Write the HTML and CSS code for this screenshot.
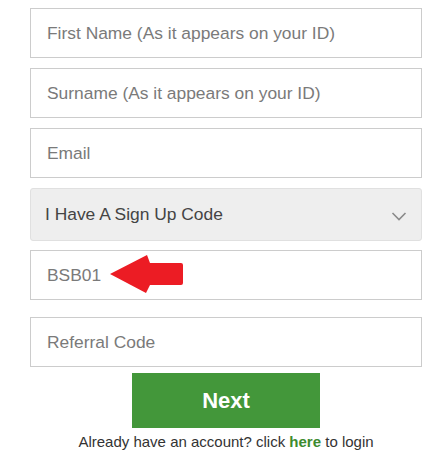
FILE: index.html
```html
<!DOCTYPE html>
<html>
<head>
<meta charset="utf-8">
<link rel="stylesheet" href="styles.css">
</head>
<body>
<form class="form">
  <input class="field" type="text" placeholder="First Name (As it appears on your ID)">
  <input class="field" type="text" placeholder="Surname (As it appears on your ID)">
  <input class="field" type="text" placeholder="Email">
  <div class="select">
    <span class="select-text">I Have A Sign Up Code</span>
    <svg class="chevron" width="16" height="10" viewBox="0 0 16 10"><path d="M1.5 2 L8 8.5 L14.5 2" fill="none" stroke="#8a8a8a" stroke-width="1.6"/></svg>
  </div>
  <div class="code-wrap">
    <input class="field code" type="text" placeholder="BSB01">
    <svg class="arrow" width="75" height="40" viewBox="0 0 75 40"><path d="M0 19 L37 0 L40 8 L71 8 Q73 8 73 10 L73 28 Q73 30 71 30 L40 30 L36 38 Z" fill="#ec1c24"/></svg>
  </div>
  <input class="field referral" type="text" placeholder="Referral Code">
  <button class="next" type="button">Next</button>
  <p class="login">Already have an account? click <a href="#">here</a> to login</p>
</form>
</body>
</html>
```
FILE: styles.css
```css
* { box-sizing: border-box; }
body {
  margin: 0;
  background: #fff;
  font-family: "Liberation Sans", Arial, sans-serif;
}
.form {
  width: 392px;
  margin: 0 0 0 30px;
  padding-top: 8px;
  display: flex;
  flex-direction: column;
  align-items: center;
}
.field {
  display: block;
  width: 392px;
  height: 50px;
  border: 1px solid #cccccc;
  background: #fff;
  padding: 0 16px;
  font-family: "Liberation Sans", Arial, sans-serif;
  font-size: 17.4px;
  color: #555;
  margin: 0 0 10px 0;
  outline: none;
}
.field::placeholder { color: #7a7a7a; opacity: 1; }
.select {
  width: 392px;
  height: 53px;
  background: #eeeeee;
  border: 1px solid #e0e0e0;
  border-radius: 3px;
  display: flex;
  align-items: center;
  justify-content: space-between;
  padding: 0 14px 0 14px;
  margin-bottom: 9px;
}
.select-text {
  font-size: 17.4px;
  color: #444;
}
.chevron { display: block; margin-top: 2px; }
.code-wrap {
  position: relative;
  width: 392px;
}
.code-wrap .field { margin-bottom: 17px; }
.arrow {
  position: absolute;
  left: 80px;
  top: 5px;
}
.next {
  width: 188px;
  height: 55px;
  margin-top: -4px;
  background: #43973a;
  border: none;
  color: #fff;
  font-family: "Liberation Sans", Arial, sans-serif;
  font-weight: bold;
  font-size: 22px;
  padding: 0;
}
.login {
  margin: 5px 0 0 0;
  font-size: 15px;
  color: #333;
  line-height: 18px;
}
.login a {
  color: #3d8b2f;
  font-weight: bold;
  text-decoration: none;
}
```
